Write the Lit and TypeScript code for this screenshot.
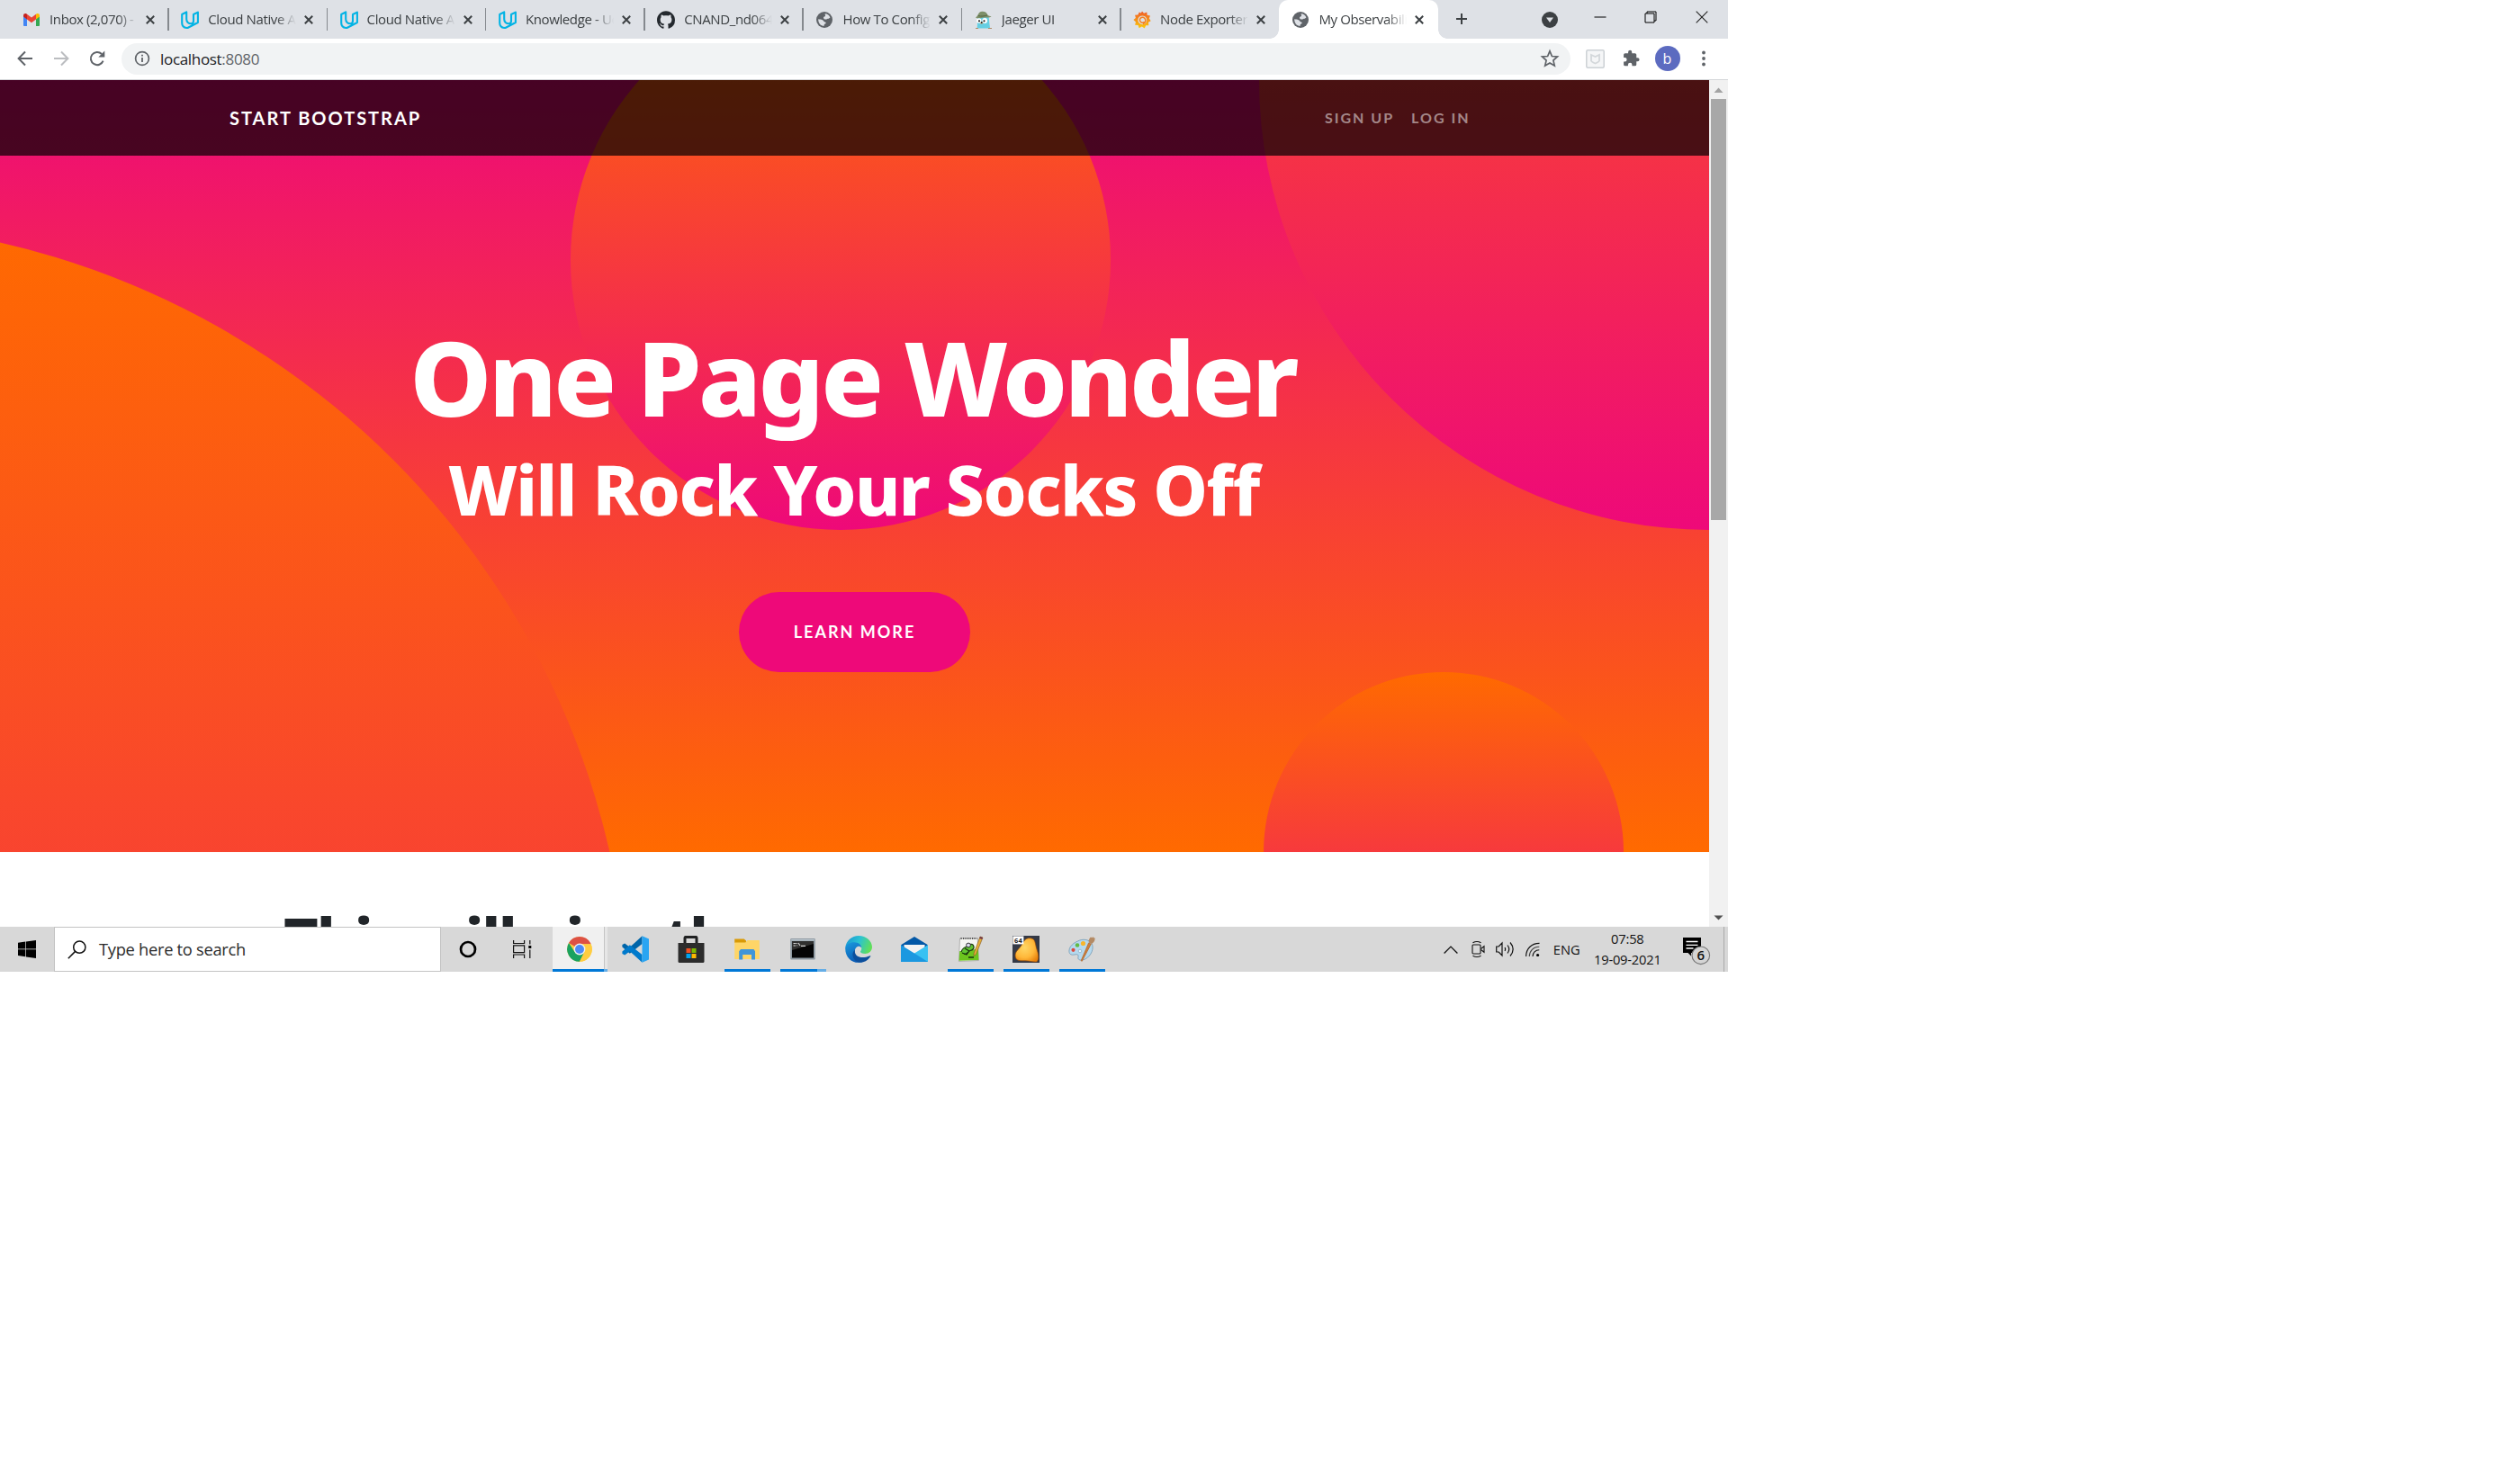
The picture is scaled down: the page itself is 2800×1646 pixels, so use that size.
import { LitElement, html, svg, css, nothing } from 'lit';
import { customElement } from 'lit/decorators.js';

const udacity = svg`<path fill="none" stroke="#02b3e4" stroke-width="2.100" stroke-linejoin="round" d="M6.200 1.400L1.200 4v9.500c0 3.700 2.800 5.500 6.300 5.500L18.900 13V1.600L14 4v7.200c0 2-1 3.100-2.600 3.100-3 0-5.200-2-5.200-5z"/>`;
const globe = svg`<circle cx="10" cy="10" r="9" fill="#5f6368"/><path d="M3.200 9.200c1.800.2 3.800.2 5.200 1.300 1.200 1 .8 1.600 2.400 2 1.600.5 1 1.700-.2 2.100-1 .4-.9 1.300-1.100 2.300C5.900 16.800 3 13.600 3.200 9.200zM10.700 3.300c2.800.1 4.900 1.700 5.700 4.200-.9.500-1.500 1.500-2.400 1.300-1-.2-1.300.9-2.500.8-1.600-.2-2.600-.9-2.500-2.200.1-1.200 2.100-.8 2.100-1.900 0-.8-.6-1.300-.4-2.200z" fill="#dee1e6"/>`;

const favicons: Record<string, unknown> = {
  gmail: svg`<path d="M1 5v11.200c0 .5.400.8.900.8H5V8.500z" fill="#4285f4"/><path d="M15 8.500V17h3.100c.5 0 .9-.3.9-.8V5z" fill="#34a853"/><path d="M1 5.200C1 3.300 3 2.400 4.600 3.500L5 3.800v5.700L1 6.500z" fill="#c5221f"/><path d="M19 5.200c0-1.900-2-2.800-3.600-1.700l-.4.300v5.700l4-3z" fill="#fbbc04"/><path d="M5 3.800l5 3.800 5-3.800v5.700l-5 3.800-5-3.800z" fill="#ea4335"/>`,
  udacity,
  github: svg`<path transform="translate(0 .3) scale(1.250)" fill="#24292e" d="M8 0C3.580 0 0 3.580 0 8c0 3.540 2.290 6.530 5.470 7.590.4.070.55-.17.55-.38 0-.19-.01-.82-.01-1.490-2.010.37-2.530-.49-2.690-.94-.09-.23-.48-.94-.82-1.130-.28-.15-.68-.52-.01-.53.63-.01 1.080.58 1.230.82.72 1.210 1.870.87 2.330.66.07-.52.28-.87.51-1.070-1.780-.2-3.640-.89-3.640-3.950 0-.87.31-1.590.82-2.150-.08-.2-.36-1.020.08-2.120 0 0 .67-.21 2.200.82.64-.18 1.320-.27 2-.27s1.360.09 2 .27c1.530-1.040 2.200-.82 2.200-.82.44 1.100.16 1.920.08 2.120.51.56.82 1.270.82 2.150 0 3.070-1.870 3.750-3.650 3.950.29.25.54.73.54 1.480 0 1.070-.01 1.930-.01 2.200 0 .21.15.46.55.38A8.010 8.010 0 0 0 16 8c0-4.420-3.580-8-8-8z"/>`,
  globe,
  jaeger: svg`<path d="M3 9c0-3 3-4 6.500-4S16 6 16 9.500c0 4 .8 6 1 10H2.500c.8-3 .3-6 .5-10.500z" fill="#66cfe3"/><path d="M1 7.500C4 5.500 4 1.500 7 1c3-.8 6 .3 7 3 .6 1.800 3.500 2 4.500 2-1 2-5 1.500-8 1.500S3.500 9.500 1 7.500z" fill="#7d8f69"/><path d="M4 5.600c3 .8 7 .5 10-.8" stroke="#55643f" fill="none"/><circle cx="4.800" cy="11" r="2.700" fill="#fff"/><circle cx="11.200" cy="11" r="2.900" fill="#fff"/><circle cx="5" cy="11.300" r="1.100" fill="#222"/><circle cx="10.500" cy="11.300" r="1.100" fill="#222"/><ellipse cx="7.700" cy="13.600" rx="1.700" ry="1.200" fill="#c9a77f"/><circle cx="7.700" cy="13" r=".9" fill="#222"/><path d="M1 19.500h3M15 19.500h4" stroke="#b08d6a"/>`,
  grafana: svg`<defs><linearGradient id="gf" x1="0" y1="0" x2="0" y2="1"><stop offset="0" stop-color="#f05a28"/><stop offset="1" stop-color="#fbca0a"/></linearGradient></defs><path fill="url(#gf)" d="M10 .5l2 2.300 3.300-1.300.3 3.200 3.400.8-1.200 3 1.900 2.700-2.700 1.600.3 3.500-3.100-.1-1.500 3.300-2.900-2-3.200 1.700-1-3.200-3.500-.2.900-3.300L.4 10l2.500-2-.8-3.300 3.300-.3L6.800 1.400l2 1.200z"/><circle cx="10.300" cy="10.300" r="4.900" fill="#dee1e6"/><path d="M12.600 12.300a3 3 0 1 1 .2-4c1.900 2.300.9 5.600-2 6.300" fill="none" stroke="#f5801f" stroke-width="1.500"/>`,
};

const tabs = [
  { icon: 'gmail', title: 'Inbox (2,070) - b' },
  { icon: 'udacity', title: 'Cloud Native Ap' },
  { icon: 'udacity', title: 'Cloud Native Ap' },
  { icon: 'udacity', title: 'Knowledge - Ud' },
  { icon: 'github', title: 'CNAND_nd064_' },
  { icon: 'globe', title: 'How To Configu' },
  { icon: 'jaeger', title: 'Jaeger UI' },
  { icon: 'grafana', title: 'Node Exporter F' },
  { icon: 'globe', title: 'My Observabilit', active: true },
];

@customElement('browser-tabs')
class BrowserTabs extends LitElement {
  static styles = css`
    :host { display: flex; height: 43px; background: #dee1e6; padding-left: 11px; box-sizing: border-box; font: 15px/41px 'Open Sans', sans-serif; color: #3c4043; }
    .tab { width: 176.300px; box-sizing: border-box; padding-left: 14px; display: flex; align-items: center; flex: none; position: relative; }
    .tab::after { content: ''; position: absolute; right: -0.500px; top: 9px; width: 1.500px; height: 25px; background: #85898e; }
    .tab.active { background: #fff; border-radius: 10px 10px 0 0; }
    .tab.before::after { display: none; }
    .tab.active::after { right: -10px; top: 33px; width: 10px; height: 10px; background: radial-gradient(circle at 100% 0, transparent 9.500px, #fff 10px); }
    .tab.active::before { content: ''; position: absolute; left: -10px; top: 33px; width: 10px; height: 10px; background: radial-gradient(circle at 0 0, transparent 9.500px, #fff 10px); }
    .icon { width: 20px; height: 20px; flex: none; }
    .title { margin-left: 10px; width: 98px; height: 42px; white-space: nowrap; overflow: hidden; letter-spacing: -0.380px; -webkit-mask-image: linear-gradient(90deg, #000 76px, transparent 98px); }
    .close { width: 10px; height: 10px; margin-left: 9px; flex: none; }
    .plus { width: 12px; height: 12px; margin: 15px 0 0 20px; }
    .search { width: 18px; height: 18px; margin: 13px 0 0 83px; }
    .win { width: 14px; height: 14px; margin-top: 11.500px; }
    .min { margin-left: 40px; }
    .max { margin-left: 42px; }
    .x { margin-left: 43.500px; }
  `;
  render() {
    return html`
      ${tabs.map((t, i) => html`<div class="tab ${t.active ? 'active' : i === 7 ? 'before' : ''}">
        <svg class="icon" viewBox="0 0 20 20">${favicons[t.icon]}</svg>
        <span class="title">${t.title}</span>
        <svg class="close" viewBox="0 0 10 10"><path d="M.8.8l8.400 8.400M9.200.8L.8 9.200" stroke="#3c4043" stroke-width="2"/></svg>
      </div>`)}
      <svg class="plus" viewBox="0 0 12 12"><path d="M6 0v12M0 6h12" stroke="#3c4043" stroke-width="2"/></svg>
      <svg class="search" viewBox="0 0 18 18"><circle cx="9" cy="9" r="9" fill="#3c4043"/><path d="M5 6.500h8L9 12z" fill="#dee1e6"/></svg>
      <svg class="win min" viewBox="0 0 14 14"><path d="M.5 7h13" stroke="#000"/></svg>
      <svg class="win max" viewBox="0 0 14 14"><path d="M1 3h10v10H1zM3 3V1h10v10h-2" fill="none" stroke="#000"/></svg>
      <svg class="win x" viewBox="0 0 14 14"><path d="M.7.7l12.600 12.600M13.300.7L.7 13.300" stroke="#222" stroke-width="1.100"/></svg>
    `;
  }
}

@customElement('browser-toolbar')
class BrowserToolbar extends LitElement {
  static styles = css`
    :host { display: flex; align-items: center; height: 46px; box-sizing: border-box; padding: 0 0 1px 17.500px; background: #fff; border-bottom: 1px solid #d5d7da; }
    svg { flex: none; display: block; }
    .nav { width: 20px; height: 20px; margin-right: 20px; }
    .nav.reload { margin-right: 17.500px; }
    .omni { width: 1610px; height: 35px; border-radius: 17.500px; background: #f1f3f4; display: flex; align-items: center; box-sizing: border-box; padding: 0 12px 0 13.500px; font: 17px/35px 'Open Sans', sans-serif; letter-spacing: -0.320px; color: #202124; }
    .info { width: 18px; height: 18px; margin-right: 11.500px; }
    .port { color: #5f6368; flex: 1; }
    .star { width: 22px; height: 22px; }
    .shield { width: 21px; height: 21px; margin-left: 17px; }
    .puzzle { width: 20px; height: 20px; margin-left: 18.500px; }
    .avatar { width: 28px; height: 28px; margin-left: 17px; border-radius: 50%; background: #5c6bc0; color: #fff; font: 16px/28px 'Open Sans', sans-serif; text-align: center; }
    .dots { width: 4px; height: 18px; margin-left: 24px; }
  `;
  render() {
    return html`
      <svg class="nav" viewBox="0 0 20 20"><path d="M18 10H3M10 2.500L2.600 10l7.400 7.500" fill="none" stroke="#5f6368" stroke-width="2"/></svg>
      <svg class="nav" viewBox="0 0 20 20"><path d="M2 10h15M10 2.500l7.400 7.500-7.400 7.500" fill="none" stroke="#bbbdc0" stroke-width="2"/></svg>
      <svg class="nav reload" viewBox="0 0 20 20"><path d="M16.600 12.600A7.100 7.100 0 1 1 15 5" fill="none" stroke="#5f6368" stroke-width="2"/><path d="M18.300 1.500v7h-7z" fill="#5f6368"/></svg>
      <div class="omni">
        <svg class="info" viewBox="0 0 18 18"><circle cx="9" cy="9" r="7.400" fill="none" stroke="#5f6368" stroke-width="1.700"/><path d="M9 8v5M9 4.800v1.800" stroke="#5f6368" stroke-width="1.800"/></svg>
        <span>localhost</span><span class="port">:8080</span>
        <svg class="star" viewBox="0 0 22 22"><path d="M11 2.800l2.400 5.700 6.100.5-4.600 4.100 1.400 6-5.300-3.200-5.300 3.200 1.400-6L2.500 9l6.100-.5z" fill="none" stroke="#5f6368" stroke-width="1.700"/></svg>
      </div>
      <svg class="shield" viewBox="0 0 21 21"><rect x=".8" y=".8" width="19.400" height="19.400" rx="1.500" fill="#f5f6f7" stroke="#ccd1d5" stroke-width="1.500"/><path d="M6 6l4.500 2L15 6v6.500c0 1-1.500 1.700-4.500 3-3-1.300-4.500-2-4.500-3z" fill="none" stroke="#d3d7da" stroke-width="1.800"/></svg>
      <svg class="puzzle" viewBox="0 0 24 24"><path fill="#5f6368" d="M21 11h-1.500V7a2 2 0 0 0-2-2h-4V3.500a2.500 2.500 0 0 0-5 0V5h-4a2 2 0 0 0-2 2v3.800H4a2.700 2.700 0 0 1 0 5.400H2.500V20a2 2 0 0 0 2 2h3.800v-1.500a2.700 2.700 0 0 1 5.400 0V22h3.800a2 2 0 0 0 2-2v-4H21a2.500 2.500 0 0 0 0-5z"/></svg>
      <div class="avatar">b</div>
      <svg class="dots" viewBox="0 0 4 18"><g fill="#5f6368"><circle cx="2" cy="2.500" r="1.900"/><circle cx="2" cy="9" r="1.900"/><circle cx="2" cy="15.500" r="1.900"/></g></svg>
    `;
  }
}

@customElement('wonder-page')
class WonderPage extends LitElement {
  static styles = css`
    :host { display: flex; height: 941px; overflow: hidden; background: #fff; }
    .page { width: 1899px; height: 941px; overflow: hidden; position: relative; }
    .nav { position: absolute; inset: 0 0 auto 0; height: 84px; background: rgba(0, 0, 0, 0.7); display: flex; align-items: center; justify-content: space-between; box-sizing: border-box; padding: 0 265.500px 0 255px; font: 700 16px/84px Lato, sans-serif; letter-spacing: 2px; }
    .brand { font-size: 20px; color: #fff; }
    .links { display: flex; gap: 19px; color: rgba(255, 255, 255, 0.5); }
    .masthead { position: relative; overflow: hidden; height: 858px; box-sizing: border-box; padding-top: 258px; background: linear-gradient(0deg, #ff6a00 0%, #ee0979 100%); text-align: center; color: #fff; }
    .circle { position: absolute; border-radius: 50%; background: linear-gradient(0deg, #ee0979 0%, #ff6a00 100%); }
    .c1 { width: 1800px; height: 1800px; bottom: -1100px; left: -1100px; }
    .c2 { width: 1000px; height: 1000px; top: -500px; right: -500px; }
    .c3 { width: 400px; height: 400px; bottom: -200px; right: 5%; }
    .c4 { width: 600px; height: 600px; top: -100px; right: 35%; }
    .content { position: relative; display: flex; flex-direction: column; align-items: center; }
    h1, h2, h3 { margin: 0; font-family: 'Noto Sans', sans-serif; font-weight: 800; white-space: nowrap; }
    h1 { font-size: 115px; line-height: 144px; letter-spacing: -3.600px; padding-right: 4px; }
    h2 { font-size: 76.500px; line-height: 104px; letter-spacing: -1.450px; padding-right: 2px; }
    .btn { margin-top: 63px; width: 257px; height: 89px; border-radius: 44.500px; background: #ee0979; font: 700 18px/88px Lato, sans-serif; letter-spacing: 2px; }
    .section { padding: 55px 0 0 315px; }
    h3 { font-size: 66.500px; line-height: 80px; letter-spacing: -1.900px; color: #212529; }
    .scroll { width: 21px; height: 941px; background: #f1f1f1; display: flex; flex-direction: column; align-items: center; flex: none; }
    .thumb { width: 17px; height: 468px; background: #a8a8a8; margin-bottom: auto; }
    .arrow { width: 11px; height: 6px; margin: 8px 0 7px; }
  `;
  render() {
    return html`
      <div class="page">
        <div class="masthead">
          <div class="circle c1"></div>
          <div class="circle c2"></div>
          <div class="circle c3"></div>
          <div class="circle c4"></div>
          <div class="content">
            <h1>One Page Wonder</h1>
            <h2>Will Rock Your Socks Off</h2>
            <div class="btn">LEARN MORE</div>
          </div>
        </div>
        <div class="section"><h3>This will give the</h3></div>
        <div class="nav"><span class="brand">START BOOTSTRAP</span><div class="links"><span>SIGN UP</span><span>LOG IN</span></div></div>
      </div>
      <div class="scroll">
        <svg class="arrow" viewBox="0 0 11 6"><path d="M5.500 .5L10.500 6H.5z" fill="#a3a3a3"/></svg>
        <div class="thumb"></div>
        <svg class="arrow" viewBox="0 0 11 6"><path d="M.5 .5h10L5.500 5.500z" fill="#505050"/></svg>
      </div>
    `;
  }
}

const apps: { name: string; run?: string; art: unknown }[] = [
  { name: 'chrome', run: 'current', art: svg`<circle cx="15" cy="15" r="13.800" fill="#ffcd40"/><path d="M15 15L3 8.100A13.800 13.800 0 0 1 27 8.100L27.600 9.300H15z" fill="#dd5144"/><path d="M3 8.100A13.800 13.800 0 0 0 15 28.800L20.500 18 15 15 9.600 18z" fill="#1aa260"/><path d="M15 28.800A13.800 13.800 0 0 0 27.600 9.300H15L20.400 18z" fill="#ffcd40"/><circle cx="15" cy="15" r="6.400" fill="#f1f1f1"/><circle cx="15" cy="15" r="5" fill="#4c8bf5"/>` },
  { name: 'code', art: svg`<path d="M22.500.3L8.800 12.800 3.200 8.500.4 9.900v2.500L8 19l.8.700L22.500 9z" fill="#0065a9"/><path d="M22.500 29.700L8.800 17.200l-5.600 4.300L.4 20.100v-2.500L8 11l.8-.7L22.500 21z" fill="#007acc"/><path d="M22.500.3L30 3.500v23l-7.500 3.200V7z" fill="#2aa5f2"/>` },
  { name: 'store', art: svg`<path d="M8 9V2.600C8 1.800 8.500 1.400 9.200 1.400h10.600c.7 0 1.200.4 1.200 1.200V9" fill="none" stroke="#202122" stroke-width="3"/><path d="M.5 8h29v20.500q0 1.500-1.500 1.500H2Q.5 30 .5 28.500z" fill="#2c2c2c"/><path d="M9.500 14h5v5h-5z" fill="#f25022"/><path d="M15.500 14h5v5h-5z" fill="#7fba00"/><path d="M9.500 20h5v5h-5z" fill="#00a4ef"/><path d="M15.500 20h5v5h-5z" fill="#ffb900"/>` },
  { name: 'explorer', run: 'single', art: svg`<path d="M1.200 3.500h10.500L14 5.500V8H1.200z" fill="#d99a06"/><path d="M1.200 7.500h12L15.500 5H28.800v21H1.200z" fill="#fed567"/><path d="M6.200 26.500v-9.300L8 15h14.500l1.500 2.200v9.300h-4V21h-9.800v5.500z" fill="#3f95d9"/>` },
  { name: 'console', run: 'stack', art: svg`<rect x="1.200" y="3" width="27.600" height="23.500" rx="1" fill="#8f9aa2"/><rect x="2.200" y="4" width="25.600" height="1.500" fill="#bac5cd"/><rect x="3" y="6" width="24" height="18.500" fill="#050505"/><path d="M3 6h24v3L3 16z" fill="#30302f"/><path d="M4.500 8.500h3M4.500 11h2.500M8.500 8v.8M8.500 10.500v.8M10 8l2 3M13 11.300h5" stroke="#d5d5d5" stroke-width="1.200"/>` },
  { name: 'edge', art: svg`<defs><linearGradient id="e1" x1="0" y1=".2" x2="1" y2=".5"><stop offset="0" stop-color="#1795d4"/><stop offset=".5" stop-color="#2bc3d2"/><stop offset="1" stop-color="#61df58"/></linearGradient><linearGradient id="e2" x1="0" y1="0" x2=".4" y2="1"><stop offset="0" stop-color="#1a9ade"/><stop offset="1" stop-color="#0b5cb5"/></linearGradient></defs><path d="M.2 13.500C1 5.600 7.500 0 15 0c8.500 0 15 6 15 12.600 0 4.500-3.500 7.500-7.700 7.500-3.600 0-5.300-1.300-5.300-2.300 0-.8 1.300-1.500 1.300-4.300 0-3-3.300-5.600-7.800-5.600C5.300 7.900 1.200 10.500.2 13.500z" fill="url(#e1)"/><path d="M.2 13.500c1-4 5-6.200 9.800-6.200 5 0 8.300 3 8.300 6.200-1-1.500-2.500-2-3.800-1.700-2.500.7-4.500 4-3.700 7.700.8 4.500 4 8.500 8.700 9.700C9 32 0 25 .2 13.500z" fill="url(#e2)"/><path d="M11 15.500c-1.500 7.500 6.500 11 16.700 6.700.7-.2.8.5.4 1-4 6-9.600 7.200-14 6C8 26.500 6.500 19 11 15.500z" fill="#0c4f9c"/>` },
  { name: 'mail', art: svg`<path d="M0 10.200L15 1l15 9.200-4 5H4z" fill="#0358a7"/><path d="M3.500 10h23v7L15 23 3.500 17z" fill="#f3f3f3"/><path d="M30 10.200L15 19.600 0 29h30z" fill="#38c1f2"/><path d="M0 10.200L30 29H0z" fill="#1b98e0"/>` },
  { name: 'notepad', run: 'single', art: svg`<path d="M3.500 3h19.700l1.200 24.500-22 1z" fill="#f6f6f2" stroke="#a3a3a3" stroke-width=".8"/><path d="M3.200 17c7 1 13-1 20.700-3l.5 13-21.800.8z" fill="#6cc51e"/><path d="M4.500 3h18" stroke="#555" stroke-width="1.800" stroke-dasharray="1.200 1.300"/><path d="M5 18c1-4 5-6.500 8-5.500 1-4 5-4 6-.5.5 2.500-2 4-4 4.500-3 1.500-3 4-7 4" fill="#60c532" stroke="#1e3f10" stroke-width="1.200"/><circle cx="13" cy="10.500" r="2.400" fill="#dde" stroke="#333"/><path d="M6 19l5 2 2-3M9 14l5 3M13 24h6" stroke="#17300c" stroke-width="1.300" fill="none"/><path d="M26 1l3 1-7.500 18.500-2.500 2 .2-3.200z" fill="#e6af3a" stroke="#7e5420" stroke-width=".6"/><path d="M26 1l3 1-.8 2-3-1z" fill="#74384a"/>` },
  { name: 'sixtyfour', run: 'single', art: svg`<defs><radialGradient id="au" cx=".4" cy=".4" r=".7"><stop offset="0" stop-color="#ffd766"/><stop offset=".6" stop-color="#ffb83a"/><stop offset="1" stop-color="#e8820d"/></radialGradient></defs><path d="M0 0h30v30H0z" fill="#343946"/><path d="M14 4.500c2-2.300 8-2.500 10 .2 1.500 2 1.500 6 3.500 12 1.700 5 2 10-.7 12.300-5 .3-8-1.300-13-1.200-5 .2-9.500 0-10.500-3.800-1-5 1.500-7 4.500-10.500 2.700-3 4-6.500 6.200-9z" fill="url(#au)" stroke="#974a08" stroke-width=".7"/><path d="M.4 .4h12v9H.4z" fill="#fff"/><text x="6.400" y="7.500" text-anchor="middle" font-family="Open Sans, sans-serif" font-size="7.500" font-weight="700" letter-spacing="0" fill="#222">64</text>` },
  { name: 'paint', run: 'single', art: svg`<path d="M10.500 6C16 3 23 4 26 8.500c3 5.500-.5 13.500-6.500 17-5 3-9.500 1.500-8.500-1.800.7-2.500-.7-3.600-3.700-2.800C2.500 22 .5 20 1 16 1.500 11.500 6 8 10.500 6z" fill="#b5d9ee" stroke="#7499b4" stroke-width=".8"/><circle cx="5.500" cy="15.800" r="2.100" fill="#db4a3f"/><circle cx="10" cy="10.500" r="2.300" fill="#62bb44"/><circle cx="16.500" cy="8.500" r="2.600" fill="#f7b52c"/><circle cx="13" cy="17" r="1.800" fill="#e8f3f9" stroke="#7e9fb8" stroke-width=".6"/><path d="M15.200 28.300l-1-.6L22.600 8l2.700 1.200z" fill="#cd7f3c" stroke="#b56a2c" stroke-width=".8"/><path d="M23 7.800c-1-2.500.3-5 2-6.300l1.500.8.800-1.300.8 1.200 1.300 0c.8 3-1 5.500-3.700 6.800z" fill="#b48a64"/>` },
];

@customElement('task-bar')
class TaskBar extends LitElement {
  static styles = css`
    :host { display: flex; height: 50px; background: #d8d8d8; font: 14.700px/23px 'Open Sans', sans-serif; color: #111; }
    svg { display: block; flex: none; }
    .start { width: 60px; display: flex; align-items: center; justify-content: center; }
    .search { width: 430px; height: 50px; box-sizing: border-box; border: 1px solid #c3c3c3; background: #fff; display: flex; align-items: center; padding-left: 14px; font-size: 18.300px; line-height: 48px; letter-spacing: -0.280px; color: #2b2b2b; }
    .glass { width: 21px; height: 21px; margin-right: 14px; }
    .cortana { width: 20px; height: 20px; margin: 15px 0 0 20px; }
    .view { width: 21px; height: 20px; margin: 15px 23.500px 0 39.500px; }
    .cell { width: 62px; height: 50px; display: flex; flex-direction: column; align-items: center; justify-content: space-between; }
    .cell svg { width: 30px; height: 30px; margin: 10px 2px 0 0; }
    .bar { width: 51px; height: 3px; background: #0078d7; margin-right: 2px; }
    .stack .bar { background: linear-gradient(90deg, #0078d7 41px, #66aee6 41px); }
    .current { background: linear-gradient(90deg, #f0f0f0 56.500px, #c4c4c4 56.500px, #c4c4c4 57.500px, #e6e6e6 57.500px); width: 61px; margin-right: 1px; }
    .current .bar { width: 61px; margin: 0; background: linear-gradient(90deg, #0078d7 57px, #66aee6 57px); }
    .tray { margin-left: auto; display: flex; align-items: center; }
    .up { width: 16px; height: 9px; margin-right: 15px; }
    .cam { width: 16px; height: 20px; margin-right: 11px; }
    .vol { width: 21px; height: 18px; margin-right: 12px; }
    .wifi { width: 16px; height: 17px; margin-right: 15px; }
    .lang { width: 28px; margin-right: 10px; }
    .clock { width: 89px; text-align: center; letter-spacing: -0.200px; height: 47px; }
    .note { width: 32px; height: 38px; margin: 6px 14.500px 0 15.700px; }
    .edge { width: 5px; height: 50px; border-left: 1px solid #a9a9a9; box-sizing: border-box; }
  `;
  render() {
    return html`
      <div class="start"><svg width="20" height="20" viewBox="0 0 20 20"><path d="M0 2.700l8.300-1.100v7.900H0zM9 1.500L20 0v9.500H9zM0 10.300h8.300v7.900L0 17.100zM9 10.300h11V20L9 18.400z"/></svg></div>
      <div class="search"><svg class="glass" viewBox="0 0 21 21"><circle cx="13.300" cy="7.700" r="6.600" fill="none" stroke="#111" stroke-width="1.500"/><path d="M8.600 12.400L.8 20.200" stroke="#111" stroke-width="1.500"/></svg>Type here to search</div>
      <svg class="cortana" viewBox="0 0 20 20"><circle cx="10" cy="10" r="8" fill="none" stroke="#000" stroke-width="2.700"/></svg>
      <svg class="view" viewBox="0 0 21 20"><path d="M.6 0v3.500h12V0M.6 20v-4h12v4M.6 5.800h12v7.800H.6zM18.800 0v4.500M18.800 10.500V20" fill="none" stroke="#111" stroke-width="1.200"/><path d="M17.300 6h3v3h-3z"/></svg>
      ${apps.map((a) => html`<div class="cell ${a.run ?? ''}"><svg viewBox="0 0 30 30">${a.art}</svg>${a.run ? html`<div class="bar"></div>` : nothing}</div>`)}
      <div class="tray">
        <svg class="up" viewBox="0 0 16 9"><path d="M.6 8.500L8 1.100l7.400 7.400" fill="none" stroke="#111" stroke-width="1.300"/></svg>
        <svg class="cam" viewBox="0 0 16 20"><g fill="none" stroke="#111" stroke-width="1.100"><rect x="1" y="5" width="9" height="10" rx="1"/><path d="M10.500 9.500l3.500-2.800v6.600l-3.500-2.800M1.500 2.800c2.500-1.400 6.500-1.400 9 0M1.500 17.200c2.500 1.400 6.500 1.400 9 0"/></g></svg>
        <svg class="vol" viewBox="0 0 21 18"><g fill="none" stroke="#111" stroke-width="1.200"><path d="M.7 6h2.500L7 2v14l-3.800-4H.7zM10 7.200c.8 1.200.8 2.400 0 3.600M13 4.500c2.300 3 2.300 6 0 9M16 1.500c4.200 5 4.200 10 0 15"/></g></svg>
        <svg class="wifi" viewBox="0 0 16 17"><g fill="none" stroke="#111" stroke-width="1.100"><path d="M.6 16C.6 7.500 6.500 1.400 15.500 1.400"/><path d="M4.300 16c0-6 4.500-10.800 11-10.800" stroke-opacity=".75"/><path d="M8 16c0-4 3-7.200 7.300-7.200"/></g><circle cx="13.600" cy="14.500" r="1.600"/></svg>
        <span class="lang">ENG</span>
        <div class="clock">07:58<br>19-09-2021</div>
        <svg class="note" viewBox="0 0 32 38"><path d="M1 3h20v17H10v3.500L6.500 20H1z"/><path d="M4.500 7.500h13M4.500 11.300h13M4.500 15h8" stroke="#fff" stroke-width="1.300"/><circle cx="20.800" cy="22.800" r="9.800" fill="#d4d4d4" stroke="#777" stroke-width="1.100"/><text x="20.800" y="28.200" text-anchor="middle" font-family="Open Sans, sans-serif" font-size="15" font-weight="600" fill="#111">6</text></svg>
        <div class="edge"></div>
      </div>
    `;
  }
}

@customElement('app-root')
class AppRoot extends LitElement {
  static styles = css`
    :host { display: block; width: 2800px; height: 1646px; background: #fff; overflow: hidden; }
    .screen { display: flex; flex-direction: column; width: 1920px; height: 1080px; overflow: hidden; }
  `;
  render() {
    return html`<div class="screen">
      <browser-tabs></browser-tabs>
      <browser-toolbar></browser-toolbar>
      <wonder-page></wonder-page>
      <task-bar></task-bar>
    </div>`;
  }
}
